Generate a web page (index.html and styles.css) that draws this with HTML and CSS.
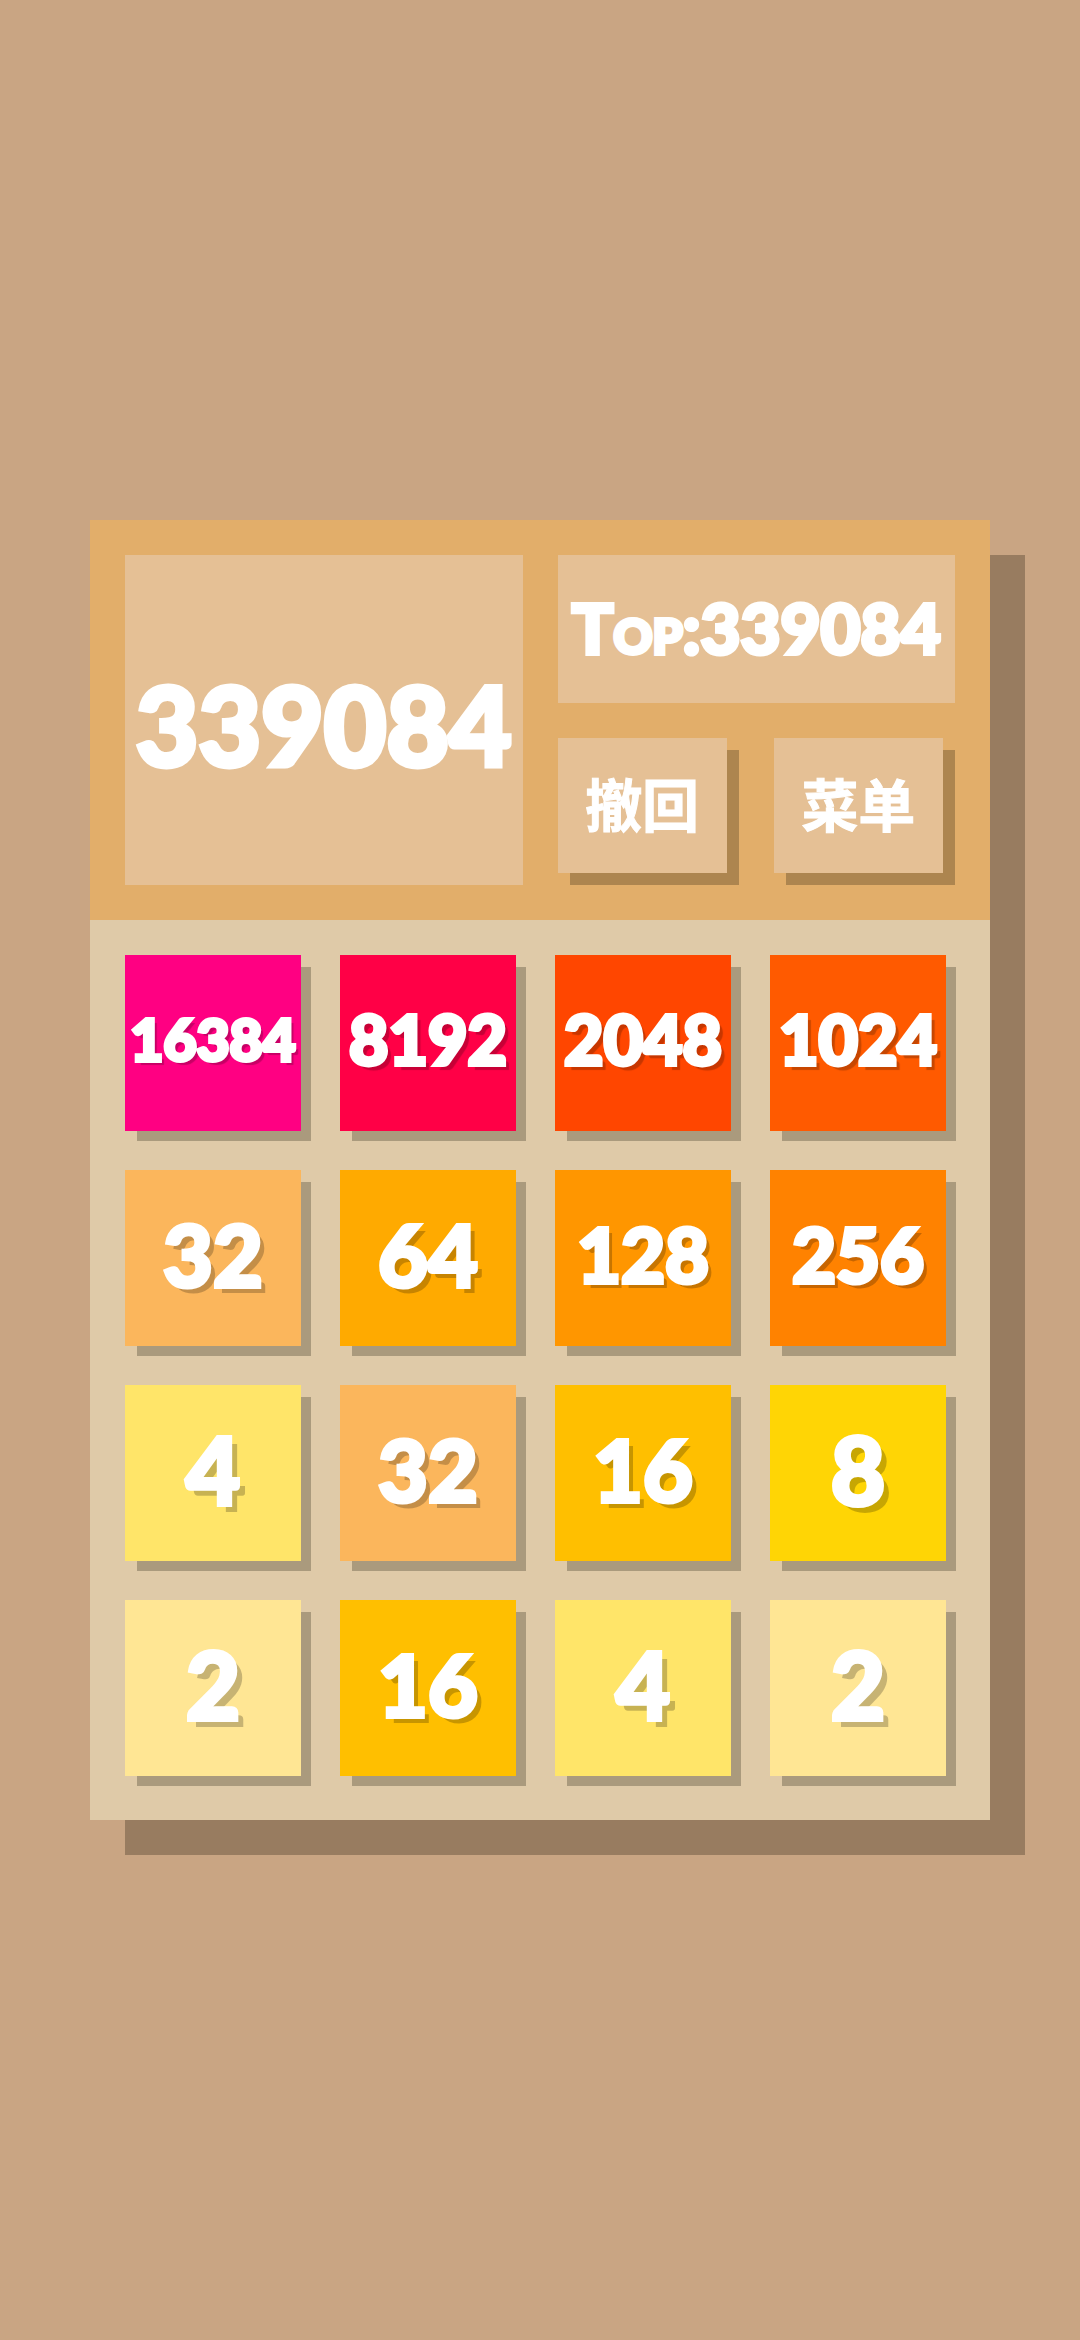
FILE: index.html
```html
<!DOCTYPE html>
<html lang="zh-CN">
<head>
<meta charset="utf-8">
<meta name="viewport" content="width=device-width, initial-scale=1">
<title>2048</title>
<link rel="stylesheet" href="styles.css">
</head>
<body>
<main class="game">
  <header class="header">
    <div class="score">339084</div>
    <div class="side">
      <div class="best">Top:339084</div>
      <div class="actions">
        <button class="action" type="button">撤回</button>
        <button class="action" type="button">菜单</button>
      </div>
    </div>
  </header>
  <section class="board">
    <div class="tile d5 v16384">16384</div>
    <div class="tile d4 v8192">8192</div>
    <div class="tile d4 v2048">2048</div>
    <div class="tile d4 v1024">1024</div>
    <div class="tile d2 v32">32</div>
    <div class="tile d2 v64">64</div>
    <div class="tile d3 v128">128</div>
    <div class="tile d3 v256">256</div>
    <div class="tile d1 v4">4</div>
    <div class="tile d2 v32">32</div>
    <div class="tile d2 v16">16</div>
    <div class="tile d1 v8">8</div>
    <div class="tile d1 v2">2</div>
    <div class="tile d2 v16">16</div>
    <div class="tile d1 v4">4</div>
    <div class="tile d1 v2">2</div>
  </section>
</main>
</body>
</html>
```
FILE: styles.css
```css
* {
  box-sizing: border-box;
}

body {
  margin: 0;
  min-height: 100vh;
  padding: 0 90px;
  display: flex;
  align-items: center;
  background: #c9a583;
  color: #fff;
  font-family: Lato, "Noto Sans CJK SC", sans-serif;
  font-weight: 900;
  line-height: 1;
}

.game {
  flex: 1;
  min-width: 0;
  background: #dfcaa8;
  box-shadow: 35px 35px 0 #987c60;
}

.header {
  display: grid;
  grid-template-columns: 1fr 1fr;
  gap: 35px;
  padding: 35px;
  background: #e2ae6a;
}

.score,
.best,
.action {
  display: flex;
  align-items: center;
  justify-content: center;
  background: #e5c095;
}

.score {
  padding-top: 8px;
  font-size: 108px;
  -webkit-text-stroke: 5px #fff;
}

.side {
  display: flex;
  flex-direction: column;
  gap: 35px;
}

.best {
  height: 148px;
  padding-bottom: 4px;
  font-size: 69px;
  font-variant-caps: small-caps;
  -webkit-text-stroke: 4px #fff;
}

.actions {
  display: grid;
  grid-template-columns: 1fr 1fr;
  gap: 47px;
  padding: 0 12px 12px 0;
}

.action {
  height: 135px;
  padding: 0;
  border: 0;
  color: inherit;
  font: inherit;
  font-size: 57px;
  font-weight: 700;
  -webkit-text-stroke: 1px #fff;
  box-shadow: 12px 12px 0 #ad854f;
  cursor: pointer;
}

.board {
  display: grid;
  grid-template-columns: repeat(4, 1fr);
  gap: 39px;
  padding: 35px 44px 44px 35px;
}

.tile {
  display: flex;
  align-items: center;
  justify-content: center;
  min-width: 0;
  aspect-ratio: 1;
  padding-bottom: 8px;
  box-shadow: 11px 11px 0 -1px #aa9a7d;
  -webkit-text-stroke: 4px #fff;
}

.d1 { font-size: 94px; text-shadow: 7px 7px 0 rgba(0, 0, 0, 0.22); }
.d2 { font-size: 86px; text-shadow: 6px 6px 0 rgba(0, 0, 0, 0.22); }
.d3 { font-size: 76px; text-shadow: 5px 5px 0 rgba(0, 0, 0, 0.22); }
.d4 { font-size: 68px; text-shadow: 5px 5px 1px rgba(0, 0, 0, 0.22); }
.d5 { font-size: 57px; text-shadow: 4px 4px 1px rgba(0, 0, 0, 0.22); }

.v2 { background: #ffe694; }
.v4 { background: #ffe569; }
.v8 { background: #ffd505; }
.v16 { background: #ffbf00; }
.v32 { background: #fbb65c; }
.v64 { background: #ffaa00; }
.v128 { background: #ff9600; }
.v256 { background: #ff8200; }
.v1024 { background: #ff5a00; }
.v2048 { background: #ff4600; }
.v8192 { background: #ff0046; }
.v16384 { background: #ff0082; }
```
